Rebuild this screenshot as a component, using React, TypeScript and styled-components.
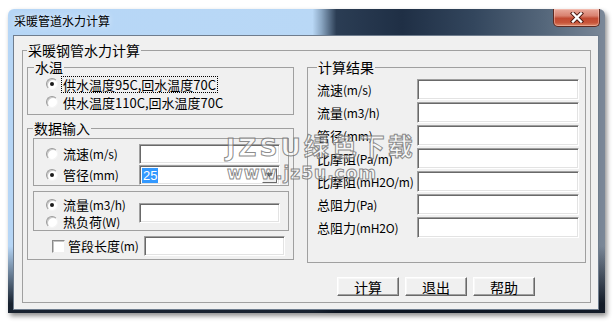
import React from 'react';
import styled, { createGlobalStyle } from 'styled-components';

const Global = createGlobalStyle`
  html, body { margin: 0; padding: 0; background: #ffffff; }
  body { font-family: "Noto Sans CJK SC", "Liberation Sans", sans-serif; color: #000; }
  * { box-sizing: border-box; }
`;

const CJK = `"Noto Sans CJK SC", "Liberation Sans", sans-serif`;

const Page = styled.div`
  position: relative;
  width: 615px;
  height: 325px;
  padding: 9px 0 0 8px;
  overflow: hidden;
`;

const Window = styled.div`
  width: 597px;
  height: 304px;
  display: flex;
  flex-direction: column;
  padding: 0 6px 3px 5px;
  border-radius: 6px 6px 0 0;
  background:
    linear-gradient(to bottom, rgba(10, 18, 30, 0) 0%, rgba(10, 18, 30, 0) 78%, rgba(10, 18, 30, 0.92) 97%),
    linear-gradient(to right, #b6d6f6 0%, #b9d8f6 51%, #8aa6c2 52.5%, #2b3d54 55%, #1f2f45 66%, #33465d 78%, #55677b 90%, #7b8898 100%);
  box-shadow: 2px 3px 5px rgba(0, 0, 0, 0.45);
`;

const TitleBar = styled.div`
  height: 26px;
  display: flex;
  align-items: flex-start;
  justify-content: space-between;
`;

const Title = styled.span`
  margin: 5px 0 0 1px;
  font-family: ${CJK};
  font-size: 12px;
  line-height: 14px;
  color: #000;
  text-shadow: 0 0 6px rgba(255, 255, 255, 0.8);
`;

const CloseButton = styled.div`
  width: 47px;
  height: 18px;
  margin-right: -1px;
  display: flex;
  align-items: center;
  justify-content: center;
  border: 1px solid #5e2a22;
  border-top: none;
  border-radius: 0 0 5px 5px;
  background: linear-gradient(to bottom, #e9aa9c 0%, #d98270 40%, #c14a32 55%, #c8553a 80%, #dc8a6a 100%);
  box-shadow: inset 0 0 0 1px rgba(255, 210, 200, 0.45);
`;

const Client = styled.div`
  flex: 1;
  display: flex;
  padding: 6px 7px 6px 8px;
  background: #f0f0f0;
  border: 1px solid #6f7d8e;
`;

const Group = styled.fieldset`
  margin: 0;
  padding: 0;
  border: 1px solid #a0a0a0;
  min-width: 0;
`;

const Legend = styled.legend`
  font-family: ${CJK};
  font-size: 14px;
  line-height: 16px;
  padding: 0 1px;
  color: #000;
`;

const MainGroup = styled(Group)`
  flex: 1;
  padding: 0 4px;
`;

const Columns = styled.div`
  display: flex;
  gap: 13px;
  padding-top: 1px;
`;

const LeftColumn = styled.div`
  width: 267px;
  display: flex;
  flex-direction: column;
  gap: 5px;
`;

const RightColumn = styled.div`
  width: 279px;
  display: flex;
  flex-direction: column;
`;

const TempGroup = styled(Group)`
  padding: 0 4px 3px 6px;
`;

const TempRow = styled.div`
  height: 18px;
  display: flex;
  align-items: center;
  padding-left: 12px;
  gap: 4px;
`;

const TempText = styled.span<{ $focus?: boolean }>`
  font-family: ${CJK};
  font-size: 13px;
  line-height: 15px;
  padding: 0 1px;
  outline: ${p => (p.$focus ? '1px dotted #000' : 'none')};
  outline-offset: 0;
`;

const InputGroup = styled(Group)`
  padding: 2px 4px 3px 5px;
  display: flex;
  flex-direction: column;
`;

const SubBox = styled.div<{ $pt: number }>`
  border: 1px solid #a0a0a0;
  padding: ${p => p.$pt}px 7px 0 12px;
  display: flex;
`;

const SubBoxGap = styled.div`
  height: 5px;
`;

const Rows = styled.div<{ $gap: number }>`
  display: flex;
  flex-direction: column;
  gap: ${p => p.$gap}px;
`;

const OptionRow = styled.div<{ $h: number }>`
  height: ${p => p.$h}px;
  display: flex;
  align-items: center;
`;

const Label = styled.span<{ $w: number; $ml?: number }>`
  width: ${p => p.$w}px;
  margin-left: ${p => p.$ml ?? 0}px;
  flex: none;
  font-family: ${CJK};
  font-size: 13px;
  line-height: 16px;
  white-space: nowrap;
  color: #000;
`;

const Unit = styled.span`
  font-size: 12px;
  letter-spacing: -0.2px;
`;

const Radio = styled.span<{ $checked?: boolean }>`
  width: 12px;
  height: 12px;
  flex: none;
  display: flex;
  align-items: center;
  justify-content: center;
  border-radius: 50%;
  background: #fff;
  border: 1px solid;
  border-color: #9a9a9a #f4f4f4 #f4f4f4 #9a9a9a;
  box-shadow: inset 1px 1px 0 #c8c8c8;
  &::after {
    content: '';
    width: 4px;
    height: 4px;
    border-radius: 50%;
    background: #1a1a1a;
    display: ${p => (p.$checked ? 'block' : 'none')};
  }
`;

const CheckBox = styled.span`
  width: 13px;
  height: 13px;
  flex: none;
  background: #fff;
  border: 1px solid;
  border-color: #8a8a8a #f0f0f0 #f0f0f0 #8a8a8a;
  box-shadow: inset 1px 1px 0 #c4c4c4;
`;

const TextBox = styled.div<{ $w: number; $h?: number; $mt?: number }>`
  width: ${p => p.$w}px;
  height: ${p => p.$h ?? 20}px;
  margin-top: ${p => p.$mt ?? 0}px;
  flex: none;
  background: #fff;
  border: 1px solid;
  border-color: #a0a0a0 #ffffff #ffffff #a0a0a0;
  box-shadow: inset 1px 1px 0 #696969, inset -1px -1px 0 #e3e3e3;
`;

const Combo = styled(TextBox)`
  display: flex;
  align-items: center;
  padding: 0 2px 0 2px;
`;

const Selected = styled.span`
  font-family: "Liberation Sans", sans-serif;
  font-size: 13px;
  line-height: 15px;
  padding: 0 1px;
  background: #3399ff;
  color: #fff;
`;

const DropButton = styled.span`
  margin-left: auto;
  width: 15px;
  height: 15px;
  display: flex;
  align-items: center;
  justify-content: center;
  background: #f0f0f0;
  border: 1px solid;
  border-color: #ffffff #696969 #696969 #ffffff;
`;

const SubRow = styled.div`
  display: flex;
  align-items: flex-start;
`;

const LengthRow = styled.div`
  margin-top: 5px;
  height: 20px;
  display: flex;
  align-items: center;
  padding-left: 19px;
`;

const ResultGroup = styled(Group)`
  padding: 4px 6px 24px 9px;
`;

const ResultRows = styled.div`
  display: flex;
  flex-direction: column;
  gap: 2px;
`;

const ResultRow = styled.div`
  height: 21px;
  display: flex;
  align-items: center;
`;

const Buttons = styled.div`
  margin: 14px 0 0 30px;
  display: flex;
  gap: 6px;
`;

const Button = styled.button`
  width: 62px;
  height: 19px;
  padding: 0;
  display: flex;
  align-items: center;
  justify-content: center;
  font-family: ${CJK};
  font-size: 14px;
  line-height: 16px;
  color: #000;
  background: #f0f0f0;
  border: 1px solid;
  border-color: #ffffff #696969 #696969 #ffffff;
  box-shadow: inset -1px -1px 0 #a0a0a0, inset 1px 1px 0 #f8f8f8;
`;

const Watermark = styled.div`
  position: absolute;
  left: 226px;
  top: 134px;
  pointer-events: none;
  display: flex;
  flex-direction: column;
  font-family: "DejaVu Sans", "Noto Sans CJK SC", sans-serif;
  font-weight: bold;
  color: rgba(255, 255, 255, 0.5);
  -webkit-text-stroke: 1px rgba(110, 110, 110, 0.8);
  white-space: nowrap;
`;

const MarkTop = styled.span`
  font-size: 25px;
  line-height: 28px;
  letter-spacing: 3px;
`;

const MarkBottom = styled.span`
  font-size: 17px;
  line-height: 22px;
  letter-spacing: 1px;
  margin-left: 1px;
`;

const results: [string, string][] = [
  ['流速', '(m/s)'],
  ['流量', '(m3/h)'],
  ['管径', '(mm)'],
  ['比摩阻', '(Pa/m)'],
  ['比摩阻', '(mH2O/m)'],
  ['总阻力', '(Pa)'],
  ['总阻力', '(mH2O)'],
];

export default function App() {
  return (
    <>
      <Global />
      <Page>
        <Window>
          <TitleBar>
            <Title>采暖管道水力计算</Title>
            <CloseButton>
              <svg width="14" height="11" viewBox="0 0 14 11">
                <path d="M3 1.5 L11 9.5 M11 1.5 L3 9.5" stroke="#4a1810" strokeWidth="4.2" strokeLinecap="square" />
                <path d="M3 1.5 L11 9.5 M11 1.5 L3 9.5" stroke="#ffffff" strokeWidth="2.4" strokeLinecap="square" />
              </svg>
            </CloseButton>
          </TitleBar>
          <Client>
            <MainGroup>
              <Legend>采暖钢管水力计算</Legend>
              <Columns>
                <LeftColumn>
                  <TempGroup>
                    <Legend>水温</Legend>
                    <TempRow>
                      <Radio $checked />
                      <TempText $focus>供水温度95C,回水温度70C</TempText>
                    </TempRow>
                    <TempRow>
                      <Radio />
                      <TempText>供水温度110C,回水温度70C</TempText>
                    </TempRow>
                  </TempGroup>
                  <InputGroup>
                    <Legend>数据输入</Legend>
                    <SubBox $pt={5}>
                      <Rows $gap={1}>
                        <OptionRow $h={20}>
                          <Radio />
                          <Label $w={76} $ml={5}>流速<Unit>(m/s)</Unit></Label>
                          <TextBox $w={141} />
                        </OptionRow>
                        <OptionRow $h={20}>
                          <Radio $checked />
                          <Label $w={76} $ml={5}>管径<Unit>(mm)</Unit></Label>
                          <Combo $w={141}>
                            <Selected>25</Selected>
                            <DropButton>
                              <svg width="7" height="4" viewBox="0 0 7 4">
                                <path d="M0 0 H7 L3.5 4 Z" fill="#000" />
                              </svg>
                            </DropButton>
                          </Combo>
                        </OptionRow>
                      </Rows>
                    </SubBox>
                    <SubBoxGap />
                    <SubBox $pt={4}>
                      <SubRow>
                        <Rows $gap={0}>
                          <OptionRow $h={17}>
                            <Radio $checked />
                            <Label $w={76} $ml={5}>流量<Unit>(m3/h)</Unit></Label>
                          </OptionRow>
                          <OptionRow $h={17}>
                            <Radio />
                            <Label $w={76} $ml={5}>热负荷<Unit>(W)</Unit></Label>
                          </OptionRow>
                        </Rows>
                        <TextBox $w={141} $mt={7} />
                      </SubRow>
                    </SubBox>
                    <LengthRow>
                      <CheckBox />
                      <Label $w={76} $ml={3}>管段长度<Unit>(m)</Unit></Label>
                      <TextBox $w={141} />
                    </LengthRow>
                  </InputGroup>
                </LeftColumn>
                <RightColumn>
                  <ResultGroup>
                    <Legend>计算结果</Legend>
                    <ResultRows>
                      {results.map(([name, unit], i) => (
                        <ResultRow key={i}>
                          <Label $w={100}>{name}<Unit>{unit}</Unit></Label>
                          <TextBox $w={162} $h={21} />
                        </ResultRow>
                      ))}
                    </ResultRows>
                  </ResultGroup>
                  <Buttons>
                    <Button>计算</Button>
                    <Button>退出</Button>
                    <Button>帮助</Button>
                  </Buttons>
                </RightColumn>
              </Columns>
            </MainGroup>
          </Client>
        </Window>
        <Watermark>
          <MarkTop>JZSU绿色下载</MarkTop>
          <MarkBottom>www.jz5u.com</MarkBottom>
        </Watermark>
      </Page>
    </>
  );
}
